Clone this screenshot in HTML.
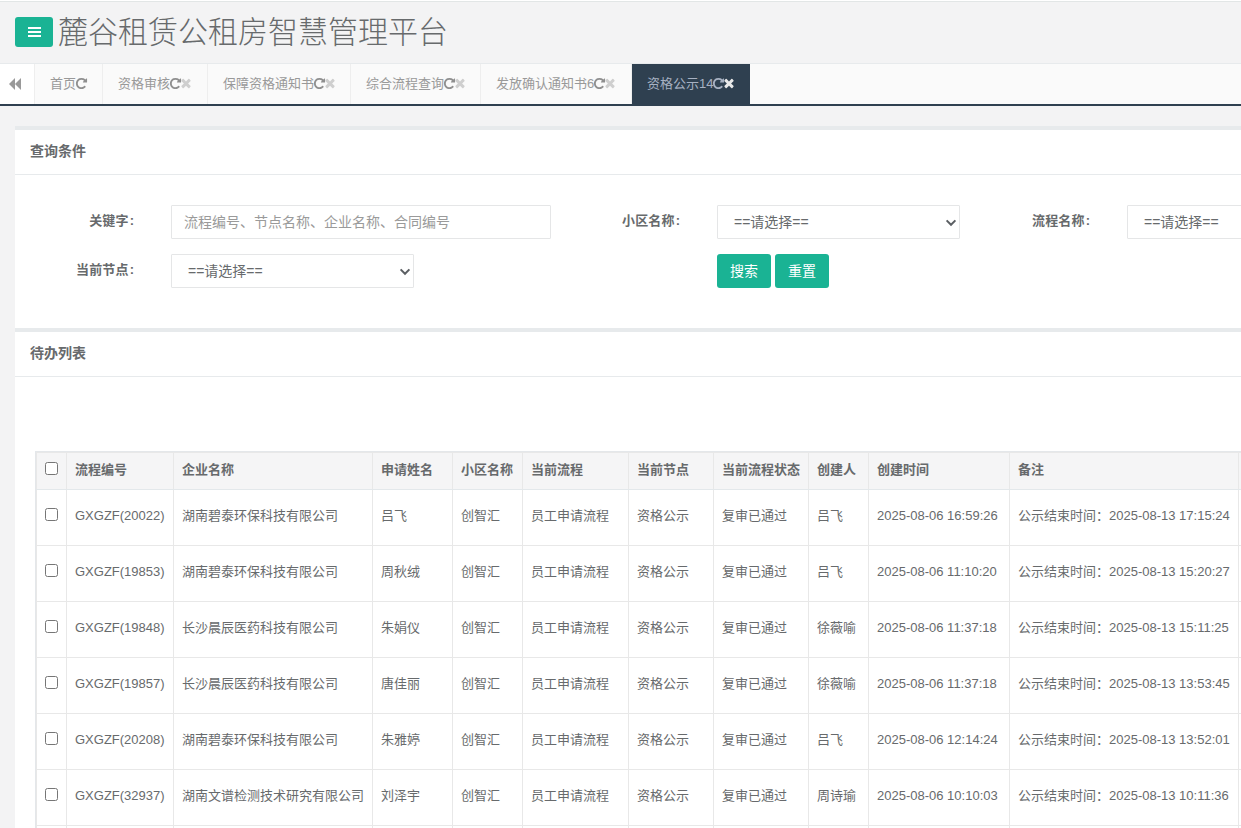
<!DOCTYPE html>
<html lang="zh-CN">
<head>
<meta charset="utf-8">
<title>麓谷租赁公租房智慧管理平台</title>
<style>
*{box-sizing:border-box;}
html,body{margin:0;padding:0;}
html{background:#f3f3f4;}
body{width:1241px;height:828px;overflow:hidden;background:#f3f3f4;color:#676a6c;
  font-family:"Liberation Sans","Noto Sans CJK SC",sans-serif;font-size:13px;position:relative;}
.topline{position:absolute;left:0;top:0;width:1241px;height:2px;background:#fff;border-bottom:1px solid #e2e6e6;}
.hdr{position:absolute;left:0;top:2px;width:1241px;height:62px;}
.menu-btn{position:absolute;left:15px;top:15px;width:38px;height:30px;background:#1ab394;border-radius:3px;}
.menu-btn i{position:absolute;left:12.8px;width:12.8px;height:2px;background:#fff;}
.title{position:absolute;left:58px;top:9px;font-size:30px;line-height:44px;font-weight:300;transform:scaleY(1.02);transform-origin:0 50%;color:#676a6c;white-space:nowrap;margin:0;}
.tabs{position:absolute;left:0;top:63px;width:1241px;height:43px;background:#fafafa;border-top:1px solid #e7eaec;border-bottom:2px solid #2f4050;}
.tabs .roll{position:absolute;left:0;top:0;width:35px;height:40px;border-right:1px solid #eee;background:#fff;}
.tab{position:absolute;top:0;height:40px;line-height:40px;background:#fafafa;border-right:1px solid #eee;color:#999;font-size:13px;white-space:nowrap;padding-left:15px;}
.tab.active{background:#2f4050;color:#a7b1c2;border-right:0;}
.card{position:absolute;left:15px;width:1240px;background:#fff;border-top:4px solid #e7eaec;}
.card h5{position:absolute;left:15px;top:9px;margin:0;font-size:14px;font-weight:700;line-height:20px;color:#676a6c;}
.card .sep{position:absolute;left:0;width:100%;height:1px;background:#e7eaec;}
.lbl{position:absolute;width:120px;text-align:right;font-weight:700;font-size:13px;line-height:20px;color:#676a6c;}
.inp{position:absolute;height:34px;border:1px solid #e5e6e7;background:#fff;border-radius:1px;font-size:14px;line-height:33px;padding-left:12px;color:#9a9a9a;white-space:nowrap;overflow:hidden;}
.sel{color:#676a6c;padding-left:16px;}
.btn{position:absolute;height:34px;width:54px;background:#1ab394;border-radius:3px;color:#fff;font-size:14px;line-height:34px;text-align:center;}
table{position:absolute;border-collapse:collapse;table-layout:fixed;}

.ico{display:inline-block;vertical-align:middle;}
.tab svg{position:relative;top:-1.5px;}
.tab .re{fill:#8f8f8f;width:13px;height:13px;margin-left:-1px;top:-1px;}
.tab .cx{fill:#cfcfcf;width:14px;height:14px;margin-left:-3.4px;}
.tab.active .re{fill:#a7b1c2;}
.tab.active .cx{fill:#e9e9e9;}

.chev{position:absolute;right:2px;top:12.7px;}

table.grid{left:21px;top:120px;border-collapse:collapse;table-layout:fixed;width:1352px;}
table.grid th,table.grid td{border:1px solid #e8e8e8;padding:0 8px 4px 8px;line-height:18px;font-size:13px;text-align:left;white-space:nowrap;overflow:hidden;vertical-align:middle;color:#676a6c;}
table.grid th{border-bottom-color:#e3e8eb;height:37px;padding-bottom:3px;background:#f5f5f6;font-weight:700;}
table.grid td{height:56px;background:#fff;}
.cb{display:block;width:13px;height:13px;border:1px solid #767676;border-radius:2.5px;background:#fff;position:relative;}
table.grid td .cb{top:-1px;}
table.grid th .cb{top:-1px;}
.twrap{position:absolute;left:20px;top:119px;width:1300px;height:500px;border-left:1px solid #e4e7ea;border-top:1px solid #e4e7ea;}
.lbl b{font-weight:700;margin-right:1px;letter-spacing:0.15px;}
</style>
</head>
<body>
<div class="topline"></div>
<div class="hdr">
  <div class="menu-btn"><i style="top:10px"></i><i style="top:14px"></i><i style="top:18px"></i></div>
  <h2 class="title">麓谷租赁公租房智慧管理平台</h2>
</div>
<div class="tabs">
  <div class="roll"><svg width="12" height="12" viewBox="0 0 12 12" style="position:absolute;left:9px;top:14px"><polygon points="0,6 6,0 6,12" fill="#999"/><polygon points="6,6 12,0 12,12" fill="#999"/></svg></div>
  <div class="tab" style="left:35px;width:68px">首页<svg class="ico re" width="13" height="13" viewBox="0 0 1792 1792"><path d="M1664 256v448q0 26-19 45t-45 19h-448q-42 0-59-40-17-39 14-69l138-138q-148-137-349-137-104 0-198.500 40.500t-163.500 109.500-109.500 163.500-40.500 198.500 40.500 198.500 109.500 163.500 163.500 109.500 198.500 40.500q119 0 225-52t179-147q7-10 23-12 15 0 25 9l137 138q9 8 9.500 20.500t-7.500 22.500q-109 132-264 204.500t-327 72.500q-156 0-298-61t-245-164-164-245-61-298 61-298 164-245 245-164 298-61q147 0 284.500 55.500t244.500 156.500l130-129q29-31 70-14 39 17 39 59z"/></svg></div>
  <div class="tab" style="left:103px;width:105px">资格审核<svg class="ico re" width="13" height="13" viewBox="0 0 1792 1792"><path d="M1664 256v448q0 26-19 45t-45 19h-448q-42 0-59-40-17-39 14-69l138-138q-148-137-349-137-104 0-198.500 40.500t-163.500 109.500-109.500 163.500-40.500 198.500 40.500 198.500 109.500 163.500 163.500 109.500 198.500 40.500q119 0 225-52t179-147q7-10 23-12 15 0 25 9l137 138q9 8 9.500 20.500t-7.500 22.500q-109 132-264 204.500t-327 72.500q-156 0-298-61t-245-164-164-245-61-298 61-298 164-245 245-164 298-61q147 0 284.500 55.500t244.500 156.500l130-129q29-31 70-14 39 17 39 59z"/></svg><svg class="ico cx" width="13" height="13" viewBox="0 0 1792 1792"><path d="M1490 1322q0 40-28 68l-136 136q-28 28-68 28t-68-28l-294-294-294 294q-28 28-68 28t-68-28l-136-136q-28-28-28-68t28-68l294-294-294-294q-28-28-28-68t28-68l136-136q28-28 68-28t68 28l294 294 294-294q28-28 68-28t68 28l136 136q28 28 28 68t-28 68l-294 294 294 294q28 28 28 68z"/></svg></div>
  <div class="tab" style="left:208px;width:143px">保障资格通知书<svg class="ico re" width="13" height="13" viewBox="0 0 1792 1792"><path d="M1664 256v448q0 26-19 45t-45 19h-448q-42 0-59-40-17-39 14-69l138-138q-148-137-349-137-104 0-198.500 40.500t-163.500 109.500-109.500 163.500-40.500 198.500 40.500 198.500 109.500 163.500 163.500 109.500 198.500 40.500q119 0 225-52t179-147q7-10 23-12 15 0 25 9l137 138q9 8 9.500 20.500t-7.500 22.500q-109 132-264 204.500t-327 72.500q-156 0-298-61t-245-164-164-245-61-298 61-298 164-245 245-164 298-61q147 0 284.500 55.500t244.500 156.500l130-129q29-31 70-14 39 17 39 59z"/></svg><svg class="ico cx" width="13" height="13" viewBox="0 0 1792 1792"><path d="M1490 1322q0 40-28 68l-136 136q-28 28-68 28t-68-28l-294-294-294 294q-28 28-68 28t-68-28l-136-136q-28-28-28-68t28-68l294-294-294-294q-28-28-28-68t28-68l136-136q28-28 68-28t68 28l294 294 294-294q28-28 68-28t68 28l136 136q28 28 28 68t-28 68l-294 294 294 294q28 28 28 68z"/></svg></div>
  <div class="tab" style="left:351px;width:130px">综合流程查询<svg class="ico re" width="13" height="13" viewBox="0 0 1792 1792"><path d="M1664 256v448q0 26-19 45t-45 19h-448q-42 0-59-40-17-39 14-69l138-138q-148-137-349-137-104 0-198.500 40.500t-163.500 109.500-109.500 163.500-40.500 198.500 40.500 198.500 109.500 163.500 163.500 109.500 198.500 40.500q119 0 225-52t179-147q7-10 23-12 15 0 25 9l137 138q9 8 9.500 20.500t-7.500 22.500q-109 132-264 204.500t-327 72.500q-156 0-298-61t-245-164-164-245-61-298 61-298 164-245 245-164 298-61q147 0 284.500 55.500t244.500 156.500l130-129q29-31 70-14 39 17 39 59z"/></svg><svg class="ico cx" width="13" height="13" viewBox="0 0 1792 1792"><path d="M1490 1322q0 40-28 68l-136 136q-28 28-68 28t-68-28l-294-294-294 294q-28 28-68 28t-68-28l-136-136q-28-28-28-68t28-68l294-294-294-294q-28-28-28-68t28-68l136-136q28-28 68-28t68 28l294 294 294-294q28-28 68-28t68 28l136 136q28 28 28 68t-28 68l-294 294 294 294q28 28 28 68z"/></svg></div>
  <div class="tab" style="left:481px;width:151px">发放确认通知书6<svg class="ico re" width="13" height="13" viewBox="0 0 1792 1792"><path d="M1664 256v448q0 26-19 45t-45 19h-448q-42 0-59-40-17-39 14-69l138-138q-148-137-349-137-104 0-198.500 40.500t-163.500 109.500-109.500 163.500-40.500 198.500 40.500 198.500 109.500 163.500 163.500 109.500 198.500 40.500q119 0 225-52t179-147q7-10 23-12 15 0 25 9l137 138q9 8 9.500 20.500t-7.500 22.500q-109 132-264 204.500t-327 72.500q-156 0-298-61t-245-164-164-245-61-298 61-298 164-245 245-164 298-61q147 0 284.500 55.500t244.500 156.500l130-129q29-31 70-14 39 17 39 59z"/></svg><svg class="ico cx" width="13" height="13" viewBox="0 0 1792 1792"><path d="M1490 1322q0 40-28 68l-136 136q-28 28-68 28t-68-28l-294-294-294 294q-28 28-68 28t-68-28l-136-136q-28-28-28-68t28-68l294-294-294-294q-28-28-28-68t28-68l136-136q28-28 68-28t68 28l294 294 294-294q28-28 68-28t68 28l136 136q28 28 28 68t-28 68l-294 294 294 294q28 28 28 68z"/></svg></div>
  <div class="tab active" style="left:632px;width:118px">资格公示14<svg class="ico re" width="13" height="13" viewBox="0 0 1792 1792"><path d="M1664 256v448q0 26-19 45t-45 19h-448q-42 0-59-40-17-39 14-69l138-138q-148-137-349-137-104 0-198.500 40.500t-163.500 109.500-109.500 163.500-40.500 198.500 40.500 198.500 109.500 163.500 163.500 109.500 198.500 40.500q119 0 225-52t179-147q7-10 23-12 15 0 25 9l137 138q9 8 9.500 20.500t-7.500 22.500q-109 132-264 204.500t-327 72.500q-156 0-298-61t-245-164-164-245-61-298 61-298 164-245 245-164 298-61q147 0 284.500 55.500t244.500 156.500l130-129q29-31 70-14 39 17 39 59z"/></svg><svg class="ico cx" width="13" height="13" viewBox="0 0 1792 1792"><path d="M1490 1322q0 40-28 68l-136 136q-28 28-68 28t-68-28l-294-294-294 294q-28 28-68 28t-68-28l-136-136q-28-28-28-68t28-68l294-294-294-294q-28-28-28-68t28-68l136-136q28-28 68-28t68 28l294 294 294-294q28-28 68-28t68 28l136 136q28 28 28 68t-28 68l-294 294 294 294q28 28 28 68z"/></svg></div>
</div>

<div class="card" style="top:126px;height:202px">
  <h5 style="top:11px">查询条件</h5>
  <div class="sep" style="top:44px"></div>
  <div class="lbl" style="left:0;width:119px;top:81px"><b>关键字</b>:</div>
  <div class="inp" style="left:156px;top:75px;width:380px">流程编号、节点名称、企业名称、合同编号</div>
  <div class="lbl" style="left:546px;width:119px;top:81px"><b>小区名称</b>:</div>
  <div class="inp sel" style="left:702px;top:75px;width:243px">==请选择==<svg class="chev" width="12" height="8" viewBox="0 0 12 8"><polyline points="1.6,1.4 6,5.8 10.4,1.4" fill="none" stroke="#5b5f63" stroke-width="2"/></svg></div>
  <div class="lbl" style="left:956px;width:119px;top:81px"><b>流程名称</b>:</div>
  <div class="inp sel" style="left:1112px;top:75px;width:243px">==请选择==<svg class="chev" width="12" height="8" viewBox="0 0 12 8"><polyline points="1.6,1.4 6,5.8 10.4,1.4" fill="none" stroke="#5b5f63" stroke-width="2"/></svg></div>
  <div class="lbl" style="left:0;width:119px;top:130px"><b>当前节点</b>:</div>
  <div class="inp sel" style="left:156px;top:124px;width:243px">==请选择==<svg class="chev" width="12" height="8" viewBox="0 0 12 8"><polyline points="1.6,1.4 6,5.8 10.4,1.4" fill="none" stroke="#5b5f63" stroke-width="2"/></svg></div>
  <div class="btn" style="left:702px;top:124px">搜索</div>
  <div class="btn" style="left:760px;top:124px">重置</div>
</div>

<div class="card" style="top:328px;height:520px">
  <h5 style="top:11px">待办列表</h5>
  <div class="sep" style="top:44px"></div>
  <div class="twrap"></div>
<table class="grid">
<colgroup><col style="width:30px"><col style="width:107px"><col style="width:199px"><col style="width:80px"><col style="width:70px"><col style="width:106px"><col style="width:85px"><col style="width:95px"><col style="width:60px"><col style="width:141px"><col style="width:229px"><col style="width:150px"></colgroup>
<thead><tr><th><span class="cb hcb"></span></th><th>流程编号</th><th>企业名称</th><th>申请姓名</th><th>小区名称</th><th>当前流程</th><th>当前节点</th><th>当前流程状态</th><th>创建人</th><th>创建时间</th><th>备注</th><th></th></tr></thead>
<tbody>
<tr><td><span class="cb"></span></td><td>GXGZF(20022)</td><td>湖南碧泰环保科技有限公司</td><td>吕飞</td><td>创智汇</td><td>员工申请流程</td><td>资格公示</td><td>复审已通过</td><td>吕飞</td><td>2025-08-06 16:59:26</td><td>公示结束时间：2025-08-13 17:15:24</td><td></td></tr>
<tr><td><span class="cb"></span></td><td>GXGZF(19853)</td><td>湖南碧泰环保科技有限公司</td><td>周秋绒</td><td>创智汇</td><td>员工申请流程</td><td>资格公示</td><td>复审已通过</td><td>吕飞</td><td>2025-08-06 11:10:20</td><td>公示结束时间：2025-08-13 15:20:27</td><td></td></tr>
<tr><td><span class="cb"></span></td><td>GXGZF(19848)</td><td>长沙晨辰医药科技有限公司</td><td>朱娟仪</td><td>创智汇</td><td>员工申请流程</td><td>资格公示</td><td>复审已通过</td><td>徐薇喻</td><td>2025-08-06 11:37:18</td><td>公示结束时间：2025-08-13 15:11:25</td><td></td></tr>
<tr><td><span class="cb"></span></td><td>GXGZF(19857)</td><td>长沙晨辰医药科技有限公司</td><td>唐佳丽</td><td>创智汇</td><td>员工申请流程</td><td>资格公示</td><td>复审已通过</td><td>徐薇喻</td><td>2025-08-06 11:37:18</td><td>公示结束时间：2025-08-13 13:53:45</td><td></td></tr>
<tr><td><span class="cb"></span></td><td>GXGZF(20208)</td><td>湖南碧泰环保科技有限公司</td><td>朱雅婷</td><td>创智汇</td><td>员工申请流程</td><td>资格公示</td><td>复审已通过</td><td>吕飞</td><td>2025-08-06 12:14:24</td><td>公示结束时间：2025-08-13 13:52:01</td><td></td></tr>
<tr><td><span class="cb"></span></td><td>GXGZF(32937)</td><td>湖南文谱检测技术研究有限公司</td><td>刘泽宇</td><td>创智汇</td><td>员工申请流程</td><td>资格公示</td><td>复审已通过</td><td>周诗瑜</td><td>2025-08-06 10:10:03</td><td>公示结束时间：2025-08-13 10:11:36</td><td></td></tr>
<tr><td></td><td></td><td></td><td></td><td></td><td></td><td></td><td></td><td></td><td></td><td></td><td></td></tr>
</tbody></table>
</div>
</body>
</html>
